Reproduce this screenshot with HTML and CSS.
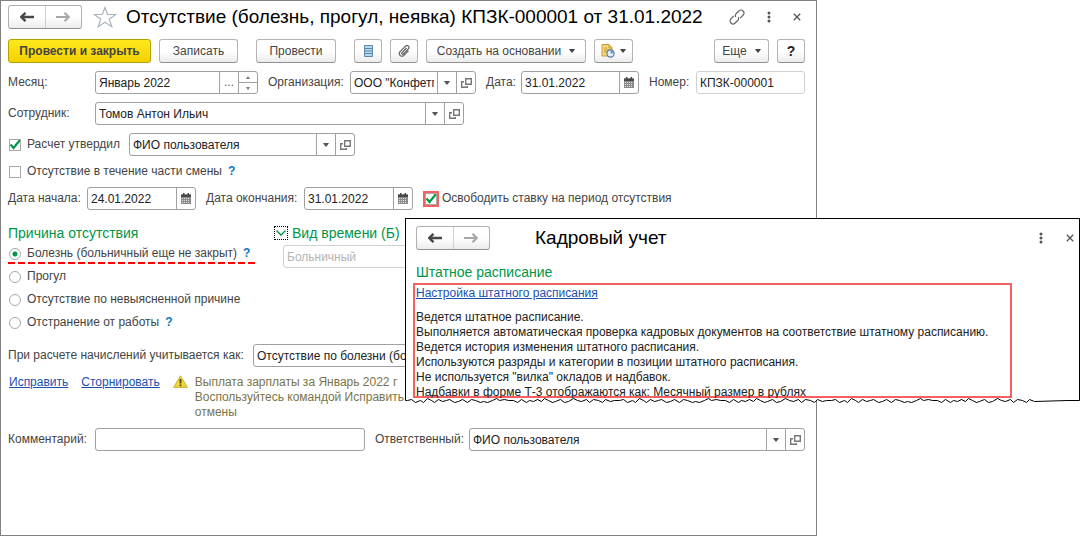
FILE: index.html
```html
<!DOCTYPE html>
<html lang="ru">
<head>
<meta charset="utf-8">
<title>Отсутствие (болезнь, прогул, неявка)</title>
<link rel="stylesheet" href="styles.css">
</head>
<body>
<svg class="sprite" aria-hidden="true">
  <symbol id="arrow-left" viewBox="0 0 14 10"><path d="M5.5 0.8 1.2 5l4.3 4.2M1.5 5H14" fill="none" stroke="currentColor" stroke-width="2.4"/></symbol>
  <symbol id="arrow-right" viewBox="0 0 14 10"><path d="M8.5 0.8 12.8 5 8.5 9.2M12.5 5H0" fill="none" stroke="currentColor" stroke-width="2.2"/></symbol>
  <symbol id="caret" viewBox="0 0 6 4"><path d="M0 0h6L3.6 3.5H2.4z" fill="currentColor"/></symbol>
  <symbol id="open" viewBox="0 0 11 10"><path d="M4.7.7h5.600v5.600H4.700z" fill="none" stroke="#777" stroke-width="1.400"/><path d="M3 3.700H.7v5.600h5.600V8" fill="none" stroke="#777" stroke-width="1.400"/></symbol>
  <symbol id="calendar" viewBox="0 0 10 11"><path d="M0 1.5h10V11H0z" fill="#8c8c8c"/><path d="M0 1.5h10V4H0z" fill="#484848"/><path d="M2 0h1.500v3H2zM6.500 0H8v3H6.500z" fill="#484848"/><path d="M1 5.500h8M1 7.500h8M1 9.500h8" stroke="#ddd" stroke-width="1" stroke-dasharray="1 1"/></symbol>
  <symbol id="dots" viewBox="0 0 4 12"><circle cx="2" cy="2" r="1.5" fill="currentColor"/><circle cx="2" cy="6" r="1.5" fill="currentColor"/><circle cx="2" cy="10" r="1.5" fill="currentColor"/></symbol>
  <symbol id="close" viewBox="0 0 8 8"><path d="M.8.8l6.400 6.400M7.200.8.8 7.200" stroke="currentColor" stroke-width="1.300"/></symbol>
</svg>

<main class="window">
  <header class="titlebar">
    <div class="nav">
      <button aria-label="Назад"><svg width="14" height="10"><use href="#arrow-left"/></svg></button>
      <button aria-label="Вперед" disabled><svg width="14" height="10"><use href="#arrow-right"/></svg></button>
    </div>
    <button class="plain star" aria-label="Избранное"><svg width="24" height="22" viewBox="0 0 24 22"><path d="M12 1.500l2.700 7h8l-6.400 4.600 2.500 7.600L12 16.200l-6.800 4.500 2.500-7.600L1.300 8.500h8z" fill="#fff" stroke="#a9b4bd" stroke-width="1.200"/></svg></button>
    <h1>Отсутствие (болезнь, прогул, неявка) КПЗК-000001 от 31.01.2022</h1>
    <div class="tools">
      <button class="plain" aria-label="Ссылка"><svg width="16" height="16" viewBox="0 0 16 16"><g fill="none" stroke="#666" stroke-width="1.200" transform="rotate(-45 8 8)"><path d="M6.500 5H2.500a3 3 0 0 0 0 6h3.500a3 3 0 0 0 2.900-2.200"/><path d="M9.500 11h4a3 3 0 0 0 0-6H10a3 3 0 0 0-2.900 2.200"/></g></svg></button>
      <button class="plain" aria-label="Меню"><svg width="4" height="12"><use href="#dots"/></svg></button>
      <button class="plain" aria-label="Закрыть"><svg width="8" height="8"><use href="#close"/></svg></button>
    </div>
  </header>

  <div class="toolbar">
    <button class="btn primary">Провести и закрыть</button>
    <button class="btn save">Записать</button>
    <button class="btn post">Провести</button>
    <button class="btn icon" aria-label="Движения документа"><svg width="9" height="12" viewBox="0 0 9 12"><path d="M.5.5h8v11h-8z" fill="#b9d8ec" stroke="#5d87a6"/><path d="M1 3.500h7M1 6h7M1 8.500h7" stroke="#5d87a6"/></svg></button>
    <button class="btn icon" aria-label="Присоединенные файлы"><svg width="12" height="12" viewBox="0 0 12 12"><path d="M8.500 3 4 7.600a.9.9 0 0 0 1.300 1.300l5-5.100a1.900 1.900 0 0 0-2.700-2.700L2 6.700a2.600 2.600 0 0 0 3.700 3.800L10.500 5.600" fill="none" stroke="#606060" stroke-width="1.200"/></svg></button>
    <button class="btn create">Создать на основании <svg width="6" height="4"><use href="#caret"/></svg></button>
    <button class="btn sheet" aria-label="Отчеты"><svg width="14" height="14" viewBox="0 0 14 14"><path d="M1 .5h7L11 3.500V12H1z" fill="#f5d878" stroke="#c39b35"/><path d="M8 .5V4h3M3 4h3M3 6h5M3 8h3" fill="none" stroke="#c39b35"/><circle cx="9.500" cy="9.500" r="3.600" fill="#e8f1fa" stroke="#547ca5" stroke-width="1.200"/><path d="M9.500 6.500v3h3a3 3 0 0 0-3-3z" fill="#6a9ccb"/></svg><svg width="6" height="4"><use href="#caret"/></svg></button>
    <button class="btn more">Еще <svg width="6" height="4"><use href="#caret"/></svg></button>
    <button class="btn icon help">?</button>
  </div>

  <form class="form">
    <div class="row">
      <label class="first" for="month">Месяц:</label>
      <div class="field month"><input id="month" value="Январь 2022"><button type="button" aria-label="Выбрать месяц" class="ellipsis">...</button><span class="spin"><button type="button" aria-label="Больше"><svg width="4" height="3" viewBox="0 0 4 3"><path d="M0 3h4L2 0z" fill="#777"/></svg></button><button type="button" aria-label="Меньше"><svg width="4" height="3" viewBox="0 0 4 3"><path d="M0 0h4L2 3z" fill="#777"/></svg></button></span></div>
      <label class="l-org" for="org">Организация:</label>
      <div class="field grow"><input id="org" value="ООО &quot;Конфетпром&quot;"><button type="button" aria-label="Список"><svg width="6" height="4"><use href="#caret"/></svg></button><button type="button" aria-label="Открыть"><svg width="11" height="10"><use href="#open"/></svg></button></div>
      <label class="l-date" for="date">Дата:</label>
      <div class="field date wide"><input id="date" value="31.01.2022"><button type="button" aria-label="Календарь"><svg width="10" height="11"><use href="#calendar"/></svg></button></div>
      <label class="l-num" for="num">Номер:</label>
      <div class="field date pale"><input id="num" value="КПЗК-000001" readonly></div>
    </div>

    <div class="row">
      <label class="first" for="emp">Сотрудник:</label>
      <div class="field employee"><input id="emp" value="Томов Антон Ильич"><button type="button" aria-label="Список"><svg width="6" height="4"><use href="#caret"/></svg></button><button type="button" aria-label="Открыть"><svg width="11" height="10"><use href="#open"/></svg></button></div>
    </div>

    <div class="row">
      <label class="check l-approved"><input type="checkbox" checked>Расчет утвердил</label>
      <div class="field approver"><input aria-label="Утвердил" value="ФИО пользователя"><button type="button" aria-label="Список"><svg width="6" height="4"><use href="#caret"/></svg></button><button type="button" aria-label="Открыть"><svg width="11" height="10"><use href="#open"/></svg></button></div>
    </div>

    <div class="row">
      <label class="check"><input type="checkbox">Отсутствие в течение части смены</label>
      <a class="hint" href="#">?</a>
    </div>

    <div class="row">
      <label class="l-start" for="start">Дата начала:</label>
      <div class="field date"><input id="start" value="24.01.2022"><button type="button" aria-label="Календарь"><svg width="10" height="11"><use href="#calendar"/></svg></button></div>
      <label class="l-end" for="end">Дата окончания:</label>
      <div class="field date"><input id="end" value="31.01.2022"><button type="button" aria-label="Календарь"><svg width="10" height="11"><use href="#calendar"/></svg></button></div>
      <label class="check marked"><input type="checkbox" checked>Освободить ставку на период отсутствия</label>
    </div>

    <div class="columns">
      <fieldset class="reasons">
        <legend>Причина отсутствия</legend>
        <div class="option"><div class="underlined"><label class="check"><input type="radio" name="reason" checked>Болезнь (больничный еще не закрыт)</label><a class="hint" href="#">?</a></div></div>
        <div class="option"><label class="check"><input type="radio" name="reason">Прогул</label></div>
        <div class="option"><label class="check"><input type="radio" name="reason">Отсутствие по невыясненной причине</label></div>
        <div class="option"><label class="check"><input type="radio" name="reason">Отстранение от работы</label><a class="hint" href="#">?</a></div>
      </fieldset>
      <section class="timekind">
        <h2><button type="button" class="toggle" aria-label="Свернуть"><svg width="10" height="6" viewBox="0 0 10 6"><path d="M.5.5 5 5 9.500.5" fill="none" stroke="#009646" stroke-width="1.400"/></svg></button>Вид времени (Б)</h2>
        <div class="field pale"><input aria-label="Вид времени" value="Больничный" disabled></div>
      </section>
    </div>

    <div class="row">
      <label class="l-calc" for="calc">При расчете начислений учитывается как:</label>
      <div class="field grow"><select id="calc"><option>Отсутствие по болезни (больничный еще не закрыт)</option></select></div>
    </div>

    <div class="row notice">
      <a href="#">Исправить</a>
      <a href="#">Сторнировать</a>
      <svg width="15" height="13" viewBox="0 0 15 13"><path d="M7.500.8 14.400 12.400H.6z" fill="#f0d838" stroke="#c9b03a" stroke-width="1" stroke-linejoin="round"/><path d="M6.600 4h1.800v4.500H6.600zM6.600 9.500h1.800v1.700H6.600z" fill="#4c4520"/></svg>
      <p>Выплата зарплаты за Январь 2022 г<br>Воспользуйтесь командой Исправить<br>отмены</p>
    </div>

    <div class="row">
      <label class="first" for="comment">Комментарий:</label>
      <div class="field comment"><input id="comment"></div>
      <label class="l-resp" for="resp">Ответственный:</label>
      <div class="field grow"><input id="resp" value="ФИО пользователя"><button type="button" aria-label="Список"><svg width="6" height="4"><use href="#caret"/></svg></button><button type="button" aria-label="Открыть"><svg width="11" height="10"><use href="#open"/></svg></button></div>
    </div>
  </form>
</main>

<aside class="popup">
  <div class="popup-body">
    <header class="titlebar">
      <div class="nav">
        <button aria-label="Назад"><svg width="14" height="10"><use href="#arrow-left"/></svg></button>
        <button aria-label="Вперед" disabled><svg width="14" height="10"><use href="#arrow-right"/></svg></button>
      </div>
      <h1>Кадровый учет</h1>
      <div class="tools">
        <button class="plain" aria-label="Меню"><svg width="4" height="12"><use href="#dots"/></svg></button>
        <button class="plain" aria-label="Закрыть"><svg width="8" height="8"><use href="#close"/></svg></button>
      </div>
    </header>
    <h2>Штатное расписание</h2>
    <div class="framed">
      <a href="#">Настройка штатного расписания</a>
      <p>Ведется штатное расписание.<br>Выполняется автоматическая проверка кадровых документов на соответствие штатному расписанию.<br>Ведется история изменения штатного расписания.<br>Используются разряды и категории в позиции штатного расписания.<br>Не используется "вилка" окладов и надбавок.<br>Надбавки в форме Т-3 отображаются как: Месячный размер в рублях</p>
    </div>
  </div>
  <svg class="torn" viewBox="0 0 675 6" preserveAspectRatio="none" aria-hidden="true"><path fill="#fff" stroke="#000" d="M.5 0V2.500h2
    l4-1 4 3 5-2 3 2 4-4 4 2 3 2 4-3 4 2 4-1 3-1 5 3 4-1 4-2 5 3 4-3 4 1 5 2 3-1 4 1 5-2 4-2 3 2 5-1 4 1 5 0
    l4 2 4-3 5 3 3-2 4 1 4-2 4 2 3-3 4 2 4 2 3-1 5-2 4 3 4-1 5-3 4 2 4 1 5-2 3 3 4-3 5 1 4 2 3-3 5 2 4-1 5 0
    l4-1 4 3 5-2 3 2 4-4 4 2 3 2 4-3 4 2 4-1 3-1 5 3 4-1 4-2 5 3 4-3 4 1 5 2 3-1 4 1 5-2 4-2 3 2 5-1 4 1 5 0
    l4 2 4-3 5 3 3-2 4 1 4-2 4 2 3-3 4 2 4 2 3-1 5-2 4 3 4-1 5-3 4 2 4 1 5-2 3 3 4-3 5 1 4 2 3-3 5 2 4-1 5 0
    l4-1 4 3 5-2 3 2 4-4 4 2 3 2 4-3 4 2 4-1 3-1 5 3 4-1 4-2 5 3 4-3 4 1 5 2 3-1 4 1 5-2 4-2 3 2 5-1 4 1 5 0
    l4 2 4-3 5 3 3-2 4 1 4-2 4 2 3-3 4 2 4 2 3-1 5-2 4 3 4-1 5-3 4 2 4 1 5-2 3 3 4-3 5 1 4 2 3-3 5 2
    L663 2.500H674.500V0"/></svg>
</aside>
</body>
</html>
```
FILE: styles.css
```css
* { box-sizing: border-box; }
body {
  margin: 0;
  position: relative;
  background: #fff;
  color: #444;
  font: 12px/15px "Liberation Sans", Arial, sans-serif;
}
.sprite { position: absolute; width: 0; height: 0; }
svg { display: block; flex: none; }
button, input, select { font: inherit; color: inherit; margin: 0; }
button { padding: 0; }
a { color: #1a50b0; text-decoration: underline; }
h1, h2, p { margin: 0; font-weight: normal; }
h1 { color: #000; font-size: 19px; line-height: 24px; white-space: nowrap; }
h2, legend { color: #009646; font-size: 14px; line-height: 18px; }

.window {
  width: calc(100% - 266px);
  min-height: 100vh;
  padding: 4px 11px 8px 7px;
  border: 1px solid #808080;
}
.titlebar { display: flex; align-items: center; height: 24px; }
.nav {
  display: flex;
  width: 74px;
  height: 24px;
  border: 1px solid #b0b0b0;
  border-bottom-color: #909090;
  border-radius: 3px;
  background: linear-gradient(#fff 50%, #ececec);
}
.nav button {
  flex: 1;
  display: flex;
  align-items: center;
  justify-content: center;
  border: 0;
  background: none;
  color: #484848;
}
.nav button + button { border-left: 1px solid #d0d0d0; color: #a8a8a8; }
.plain { border: 0; background: none; }
.star { margin: 0 9px 0 11px; }
.tools { display: flex; align-items: center; gap: 20px; margin-left: auto; padding-right: 4px; color: #555; }
.tools .plain { min-width: 8px; display: flex; justify-content: center; }

.toolbar { display: flex; gap: 8px; margin-top: 10px; }
.btn {
  display: flex;
  align-items: center;
  justify-content: center;
  gap: 8px;
  height: 24px;
  border: 1px solid #b4b4b4;
  border-bottom-color: #909090;
  border-radius: 3px;
  background: linear-gradient(#fff 50%, #ececec);
  white-space: nowrap;
}
.primary { width: 143px; border-color: #b8a000; background: linear-gradient(#ffe81e, #f2d200); font-weight: bold; }
.save { width: 79px; }
.post { width: 80px; margin: 0 10px; }
.icon { width: 28px; }
.create { width: 160px; }
.sheet { width: 39px; gap: 5px; }
.more { width: 55px; margin-left: auto; }
.help { color: #222; font-size: 14px; font-weight: bold; }

.form { display: flex; flex-direction: column; gap: 8px; margin-top: 8px; }
.row { display: flex; align-items: center; }
.row > label { flex: none; white-space: nowrap; }
.first { width: 87px; }
.l-org { width: 92px; padding-left: 10px; }
.l-date { width: 45px; padding-left: 10px; }
.l-num { width: 57px; padding-left: 10px; }
.l-approved { width: 121px; }
.l-start { width: 79px; }
.l-end { width: 108px; padding-left: 10px; }
.l-calc { width: 245px; }
.l-resp { width: 104px; padding-left: 10px; }

.field {
  display: flex;
  flex: none;
  height: 23px;
  border: 1px solid #a0a0a0;
  border-radius: 3px;
  background: #fff;
  color: #222;
  overflow: hidden;
}
.field input, .field select {
  flex: 1;
  min-width: 0;
  width: 0;
  padding: 1px 3px 0;
  border: 0;
  outline: 0;
  background: none;
  appearance: none;
}
.field button {
  flex: none;
  display: flex;
  align-items: center;
  justify-content: center;
  width: 19px;
  border: 0;
  border-left: 1px solid #a0a0a0;
  background: none;
  color: #555;
}
.field.grow { flex: 1; min-width: 0; }
.field.pale { border-color: #d0d0d0; }
.field input:disabled { color: #b4b4b4; }
.month { width: 163px; }
.spin { display: flex; flex-direction: column; width: 19px; }
.field .spin button { flex: 1; }
.spin button + button { border-top: 1px solid #a0a0a0; }
.date { width: 109px; }
.date.wide { width: 118px; }
.employee { width: 369px; }
.approver { width: 226px; }
.comment { width: 270px; }

.check { display: flex; align-items: center; white-space: nowrap; }
.check input {
  appearance: none;
  flex: none;
  width: 12px;
  height: 12px;
  margin: 0 6px 0 1px;
  border: 1px solid #a8a8a8;
  background: #fff;
}
.check input[type="checkbox"]:checked {
  background: url("data:image/svg+xml,%3Csvg xmlns='http://www.w3.org/2000/svg' viewBox='0 0 12 12'%3E%3Cpath d='M1.500 5.500 4.500 9 11 1' fill='none' stroke='%23009646' stroke-width='2.200'/%3E%3C/svg%3E") center / 12px 12px;
}
.check input[type="radio"] { border-radius: 50%; }
.check input[type="radio"]:checked { background: radial-gradient(circle, #009646 0 2px, #fff 3px); }
.marked { margin-left: 10px; }
.marked input { margin: 0 5px 0 2px; outline: 2px solid #f66060; }
.hint { margin-left: 6px; color: #0878c0; font-weight: bold; text-decoration: none; }

.columns { display: flex; margin-top: 6px; }
.reasons { width: 266px; margin: 0; padding: 0; border: 0; }
.reasons legend { padding: 0; }
.option { display: flex; align-items: center; height: 23px; }
.underlined {
  display: flex;
  align-items: center;
  height: 19px;
  margin-top: 2px;
  padding-right: 5px;
  padding-bottom: 2px;
  background: repeating-linear-gradient(90deg, red 0 7px, transparent 7px 10px) bottom / 100% 2px no-repeat;
}
.timekind { flex: 1; }
.timekind h2 { display: flex; align-items: center; gap: 4px; }
.timekind .field { margin: 3px 0 0 9px; }
.toggle {
  display: flex;
  align-items: center;
  justify-content: center;
  width: 14px;
  height: 14px;
  border: 1px dotted #000;
  background: none;
}
.columns + .row { margin-top: 2px; }
.notice { align-items: flex-start; padding-left: 1px; }
.notice a { margin-right: 13px; }
.notice svg { margin-right: 7px; }
.notice p { color: #7a7448; }

.popup { position: absolute; left: 405px; right: 3px; top: 218px; }
.popup-body {
  padding: 7px 5px 0 7px;
  border: 1px solid #000;
  border-bottom: 0;
  background: #fff;
}
.popup .nav { margin: 0 45px 0 3px; }
.popup .tools { gap: 21px; padding-right: 0; }
.popup h2 { margin: 13px 0 2px 3px; }
.framed {
  width: 599px;
  max-width: 100%;
  height: 115px;
  border: 2px solid #f66060;
  padding: 1px 1px 0;
  color: #222;
  white-space: nowrap;
}
.framed p { margin-top: 9px; }
.torn { width: 100%; height: 6px; overflow: visible; }
```
